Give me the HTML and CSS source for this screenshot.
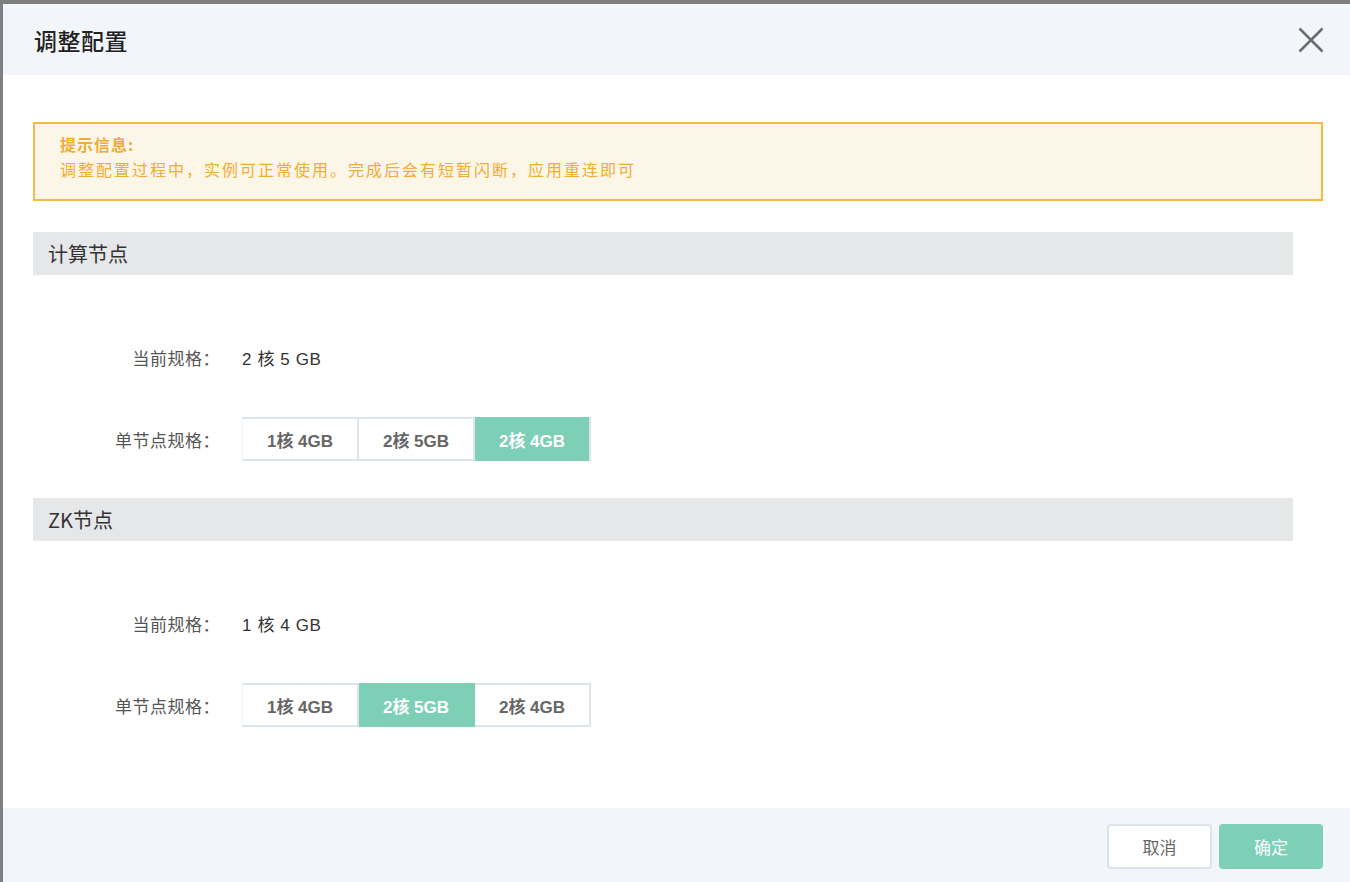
FILE: index.html
```html
<!DOCTYPE html>
<html lang="zh">
<head>
<meta charset="utf-8">
<title>调整配置</title>
<link rel="stylesheet" href="styles.css">
</head>
<body>
<div class="dialog">
  <div class="dlg-header">
    <div class="dlg-title">调整配置</div>
    <button class="close" aria-label="关闭">
      <svg width="26" height="26" viewBox="0 0 26 26"><path d="M1.5 1.5 L24.5 24.5 M24.5 1.5 L1.5 24.5" stroke="#6d6d6d" stroke-width="2.6" fill="none"/></svg>
    </button>
  </div>
  <div class="dlg-body">
    <div class="alert">
      <div class="alert-title">提示信息:</div>
      <div class="alert-text">调整配置过程中，实例可正常使用。完成后会有短暂闪断，应用重连即可</div>
    </div>

    <div class="section">
      <div class="section-head">计算节点</div>
      <div class="row row-cur">
        <div class="label">当前规格：</div>
        <div class="value">2 核 5 GB</div>
      </div>
      <div class="row">
        <div class="label">单节点规格：</div>
        <div class="seg">
          <div class="seg-btn">1核 4GB</div>
          <div class="seg-btn">2核 5GB</div>
          <div class="seg-btn active">2核 4GB</div>
        </div>
      </div>
    </div>

    <div class="section">
      <div class="section-head">ZK节点</div>
      <div class="row row-cur">
        <div class="label">当前规格：</div>
        <div class="value">1 核 4 GB</div>
      </div>
      <div class="row">
        <div class="label">单节点规格：</div>
        <div class="seg">
          <div class="seg-btn">1核 4GB</div>
          <div class="seg-btn active">2核 5GB</div>
          <div class="seg-btn">2核 4GB</div>
        </div>
      </div>
    </div>
  </div>
  <div class="dlg-footer">
    <button class="btn btn-cancel">取消</button>
    <button class="btn btn-ok">确定</button>
  </div>
</div>
</body>
</html>
```
FILE: styles.css
```css
* { box-sizing: border-box; }
html, body { margin: 0; height: 100%; }
body {
  background: #7f7f7f;
  padding: 4px 0 0 3px;
  font-family: "Noto Sans CJK SC", "Liberation Sans", sans-serif;
  overflow: hidden;
}
.dialog {
  background: #fff;
  height: 878px;
  display: flex;
  flex-direction: column;
}
.dlg-header {
  height: 71px;
  background: #f2f6fa;
  display: flex;
  align-items: center;
  justify-content: space-between;
  padding: 0 26px 0 31px;
}
.dlg-title {
  font-size: 23px;
  font-weight: 500;
  color: #222;
  letter-spacing: 0.5px;
}
.close {
  background: none;
  border: 0;
  padding: 0;
  width: 26px;
  height: 26px;
  display: flex;
  cursor: pointer;
}
.dlg-body {
  flex: 1;
  padding: 47px 27px 0 30px;
}
.alert {
  border: 2px solid #f2bb45;
  background: #fbf6e8;
  height: 79px;
  padding: 8px 25px 0 25px;
  color: #f0ad36;
}
.alert-title {
  font-size: 16px;
  font-weight: 700;
  line-height: 24px;
  letter-spacing: 1px;
}
.alert-text {
  font-size: 16px;
  line-height: 26px;
  letter-spacing: 2px;
}
.section {
  margin-top: 31px;
  margin-right: 30px;
}
.section + .section { margin-top: 37px; }
.section-head {
  height: 43px;
  background: #e6e7e9;
  padding-left: 15px;
  font-size: 20px;
  line-height: 43px;
  color: #333;
}
.row {
  display: flex;
  align-items: center;
  height: 44px;
  margin-top: 38px;
}
.row-cur { margin-top: 60px; }
.label {
  width: 187px;
  text-align: right;
  font-size: 17px;
  color: #555;
  letter-spacing: 0.5px;
  flex: none;
}
.value {
  margin-left: 22px;
  font-size: 17px;
  letter-spacing: 0.6px;
  color: #333;
  font-family: "Liberation Sans", "Noto Sans CJK SC", sans-serif;
}
.seg {
  margin-left: 22px;
  display: flex;
  height: 44px;
  border-top: 2px solid #dde4ea;
  border-bottom: 2px solid #dde4ea;
  border-left: 1px solid #f0f3f6;
}
.seg-btn {
  width: 116px;
  display: flex;
  align-items: center;
  justify-content: center;
  font-size: 17px;
  font-weight: 700;
  color: #666;
  border-right: 2px solid #dde4ea;
  font-family: "Liberation Sans", "Noto Sans CJK SC", sans-serif;
}
.seg-btn.active {
  background: #7dcfb6;
  color: #fff;
  margin: -2px 0;
  border-right-color: #7dcfb6;
}
.seg-btn.active:last-child { border-right-color: #dde4ea; }
.dlg-footer {
  height: 74px;
  background: #f2f6fa;
  display: flex;
  justify-content: flex-end;
  align-items: flex-start;
  gap: 7px;
  padding: 16px 27px 0 0;
}
.btn {
  height: 45px;
  border-radius: 4px;
  font-family: "Noto Sans CJK SC", sans-serif;
  font-size: 17px;
  cursor: pointer;
}
.btn-cancel {
  width: 105px;
  background: #fff;
  border: 2px solid #dde3ea;
  color: #666;
}
.btn-ok {
  width: 104px;
  background: #7dcfb6;
  border: 0;
  color: #fff;
}
```
